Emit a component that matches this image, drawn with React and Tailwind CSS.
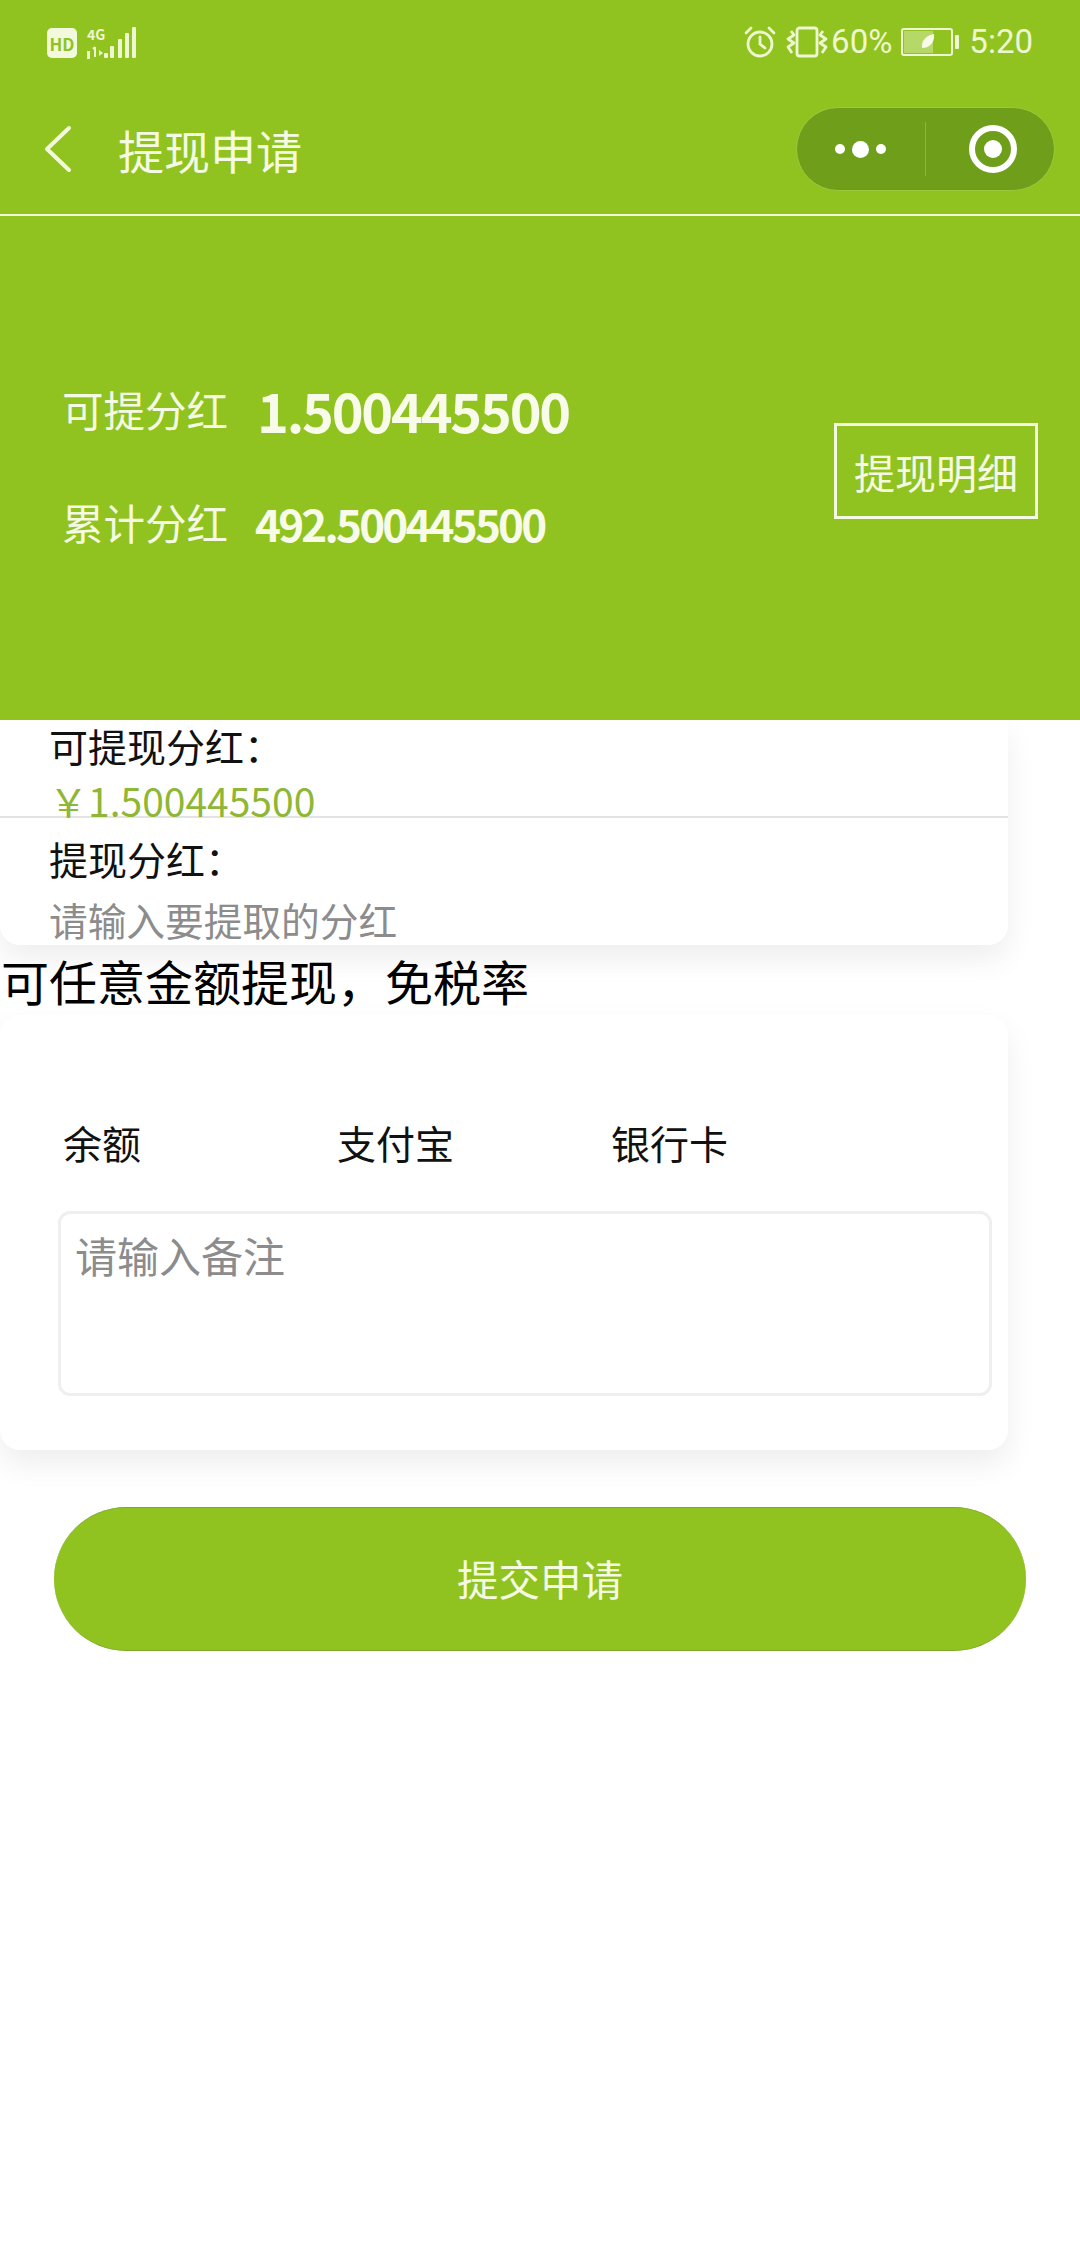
import React from 'react';

function SignalIcon() {
    return (
        <svg width="52" height="34" viewBox="0 0 52 34" fill="#eef7d2">
            <rect x="0" y="25" width="3" height="8" />
            <path d="M8 21 L8 31 M6 23 L8 21" stroke="#eef7d2" strokeWidth="2" fill="none" />
            <path d="M12 24 L16 27 L12 30 Z" />
            <rect x="17" y="27" width="4" height="5" rx="1" />
            <rect x="23" y="20" width="4" height="12" rx="1" />
            <rect x="31" y="13" width="4" height="19" rx="1" />
            <rect x="38" y="7" width="4" height="25" rx="1" />
            <rect x="45" y="1" width="4" height="31" rx="1" />
        </svg>
    );
}

function AlarmIcon() {
    return (
        <svg width="32" height="32" viewBox="0 0 32 32" fill="none" stroke="#eef7d2" strokeWidth="2.8" strokeLinecap="round">
            <circle cx="16" cy="18" r="12" />
            <path d="M16 11 L16 18 L21 22" />
            <path d="M2 7 L7 2" />
            <path d="M30 7 L25 2" />
        </svg>
    );
}

function VibrateIcon() {
    return (
        <svg width="42" height="32" viewBox="0 0 42 32" fill="none" stroke="#eef7d2" strokeWidth="2.8" strokeLinejoin="round">
            <rect x="11" y="2" width="20" height="28" rx="2.5" />
            <path d="M5 5 L8 9 L2 13 L8 17 L2 21 L6 27" />
            <path d="M37 5 L34 9 L40 13 L34 17 L40 21 L36 27" />
        </svg>
    );
}

function BatteryIcon() {
    return (
        <svg width="58" height="28" viewBox="0 0 58 28">
            <rect x="1" y="1" width="50" height="26" rx="2" fill="none" stroke="#eef7d2" strokeWidth="2" />
            <rect x="3" y="3" width="29" height="22" fill="#eef7d2" opacity="0.4" />
            <rect x="54" y="7" width="4" height="14" rx="1" fill="#eef7d2" />
            <path d="M21 20 C20 12 26 7 33 6 C34 14 29 20 21 20 Z" fill="#f7fbe8" />
        </svg>
    );
}

function StatusBar() {
    return (
        <div className="flex h-[85px] items-start justify-between pl-[47px] pr-[47px] pt-[26px] text-[#eef7d2]">
            <div className="flex items-start">
                <div className="mt-[2px] flex h-[30px] w-[30px] items-center justify-center rounded-[5px] bg-[#f3f9dd] text-[17px] font-bold leading-none text-[#90c31f]">
                    HD
                </div>
                <div className="relative ml-[10px] h-[34px] w-[52px]">
                    <SignalIcon />
                    <span className="absolute left-0 top-0 text-[14px] font-bold leading-[16px]">4G</span>
                </div>
            </div>
            <div className="flex items-center font-['Roboto',sans-serif] text-[33px] leading-[32px]">
                <AlarmIcon />
                <div className="ml-[10px]"><VibrateIcon /></div>
                <span className="ml-[3px]">60%</span>
                <div className="ml-[9px]"><BatteryIcon /></div>
                <span className="ml-[10px]">5:20</span>
            </div>
        </div>
    );
}

function NavBar() {
    return (
        <div className="flex h-[131px] items-start justify-between border-b-2 border-[#f0f7d8] pl-[44px] pr-[25px]">
            <div className="flex items-center pt-[40px]">
                <svg width="28" height="48" viewBox="0 0 28 48" fill="none" stroke="#f3f9dd" strokeWidth="4" strokeLinecap="round" strokeLinejoin="round">
                    <path d="M25 3 L3 24 L25 45" />
                </svg>
                <span className="ml-[46px] text-[46px] leading-[48px] text-[#f5fae3]">提现申请</span>
            </div>
            <div className="mt-[22px] flex h-[84px] w-[259px] items-center rounded-full border border-[#9cc83c] bg-[#6f9e1b]">
                <div className="flex w-[128px] items-center justify-end gap-[7px] pr-[39px]">
                    <span className="h-[10px] w-[10px] rounded-full bg-white" />
                    <span className="h-[17px] w-[17px] rounded-full bg-white" />
                    <span className="h-[10px] w-[10px] rounded-full bg-white" />
                </div>
                <div className="h-[54px] w-px bg-[#8db53a]" />
                <div className="flex flex-1 justify-center pl-[6px]">
                    <div className="flex h-[48px] w-[48px] items-center justify-center rounded-full border-[6px] border-white">
                        <span className="h-[18px] w-[18px] rounded-full bg-white" />
                    </div>
                </div>
            </div>
        </div>
    );
}

function Summary() {
    return (
        <div className="flex h-[504px] items-start justify-between pl-[62px] pr-[42px] text-[#f5fae3]">
            <div className="pt-[164px]">
                <div className="flex h-[60px] items-center">
                    <span className="w-[195px] text-[41.5px] leading-none">可提分红</span>
                    <span className="text-[54px] font-bold leading-none tracking-[-2.2px] text-[#f8fbe9]">1.500445500</span>
                </div>
                <div className="mt-[53px] flex h-[60px] items-center">
                    <span className="w-[193px] text-[41.5px] leading-none">累计分红</span>
                    <span className="text-[44px] font-bold leading-none tracking-[-2.8px] text-[#f8fbe9]">492.500445500</span>
                </div>
            </div>
            <div className="mt-[207px] flex h-[96px] w-[204px] items-center justify-center border-[3px] border-[#f5fae3] text-[41px] leading-none">
                提现明细
            </div>
        </div>
    );
}

function BalanceCard() {
    return (
        <div className="w-[1008px] rounded-b-[20px] bg-white shadow-[0_14px_30px_rgba(0,0,0,0.07)]">
            <div className="h-[98px] border-b-2 border-[#e3e3e3] pl-[49px]">
                <div className="pt-[4px] text-[39px] leading-[42px] text-[#111]">可提现分红：</div>
                <div className="mt-[16px] text-[39px] leading-[36px] text-[#8fb735]">￥1.500445500</div>
            </div>
            <div className="h-[127px] pl-[49px]">
                <div className="pt-[19px] text-[39px] leading-[42px] text-[#111]">提现分红：</div>
                <div className="mt-[19px] text-[38.7px] leading-[42px] text-[#8c8c8c]">请输入要提取的分红</div>
            </div>
        </div>
    );
}

function PayCard() {
    return (
        <div className="mt-[6px] h-[435px] w-[1008px] rounded-[20px] bg-white pl-[58px] pt-[106px] shadow-[0_14px_30px_rgba(0,0,0,0.07)]">
            <div className="flex h-[42px] items-center text-[39px] leading-[42px] text-[#111]">
                <span className="ml-[5px] w-[274px]">余额</span>
                <span className="w-[274px]">支付宝</span>
                <span>银行卡</span>
            </div>
            <div className="mt-[48px] h-[185px] w-[934px] rounded-[12px] border-[3px] border-[#efefef] pl-[14px] pt-[18px] text-[42px] leading-[46px] text-[#8c8c8c]">
                请输入备注
            </div>
        </div>
    );
}

export default function App() {
    return (
        <div className="h-[2244px] w-[1080px] overflow-hidden bg-white font-['Noto_Sans_CJK_SC','Noto_Sans',sans-serif]">
            <div className="relative z-10 bg-[#90c31f]">
                <StatusBar />
                <NavBar />
                <Summary />
            </div>
            <BalanceCard />
            <div className="mt-[6px] pl-[1px] text-[48px] leading-[58px] text-black">可任意金额提现，免税率</div>
            <PayCard />
            <div className="ml-[54px] mt-[57px] flex h-[144px] w-[972px] items-center justify-center rounded-full border-y border-[#7fa82a] bg-[#90c31f] text-[41.5px] leading-none text-[#f5fae3]">
                提交申请
            </div>
        </div>
    );
}
